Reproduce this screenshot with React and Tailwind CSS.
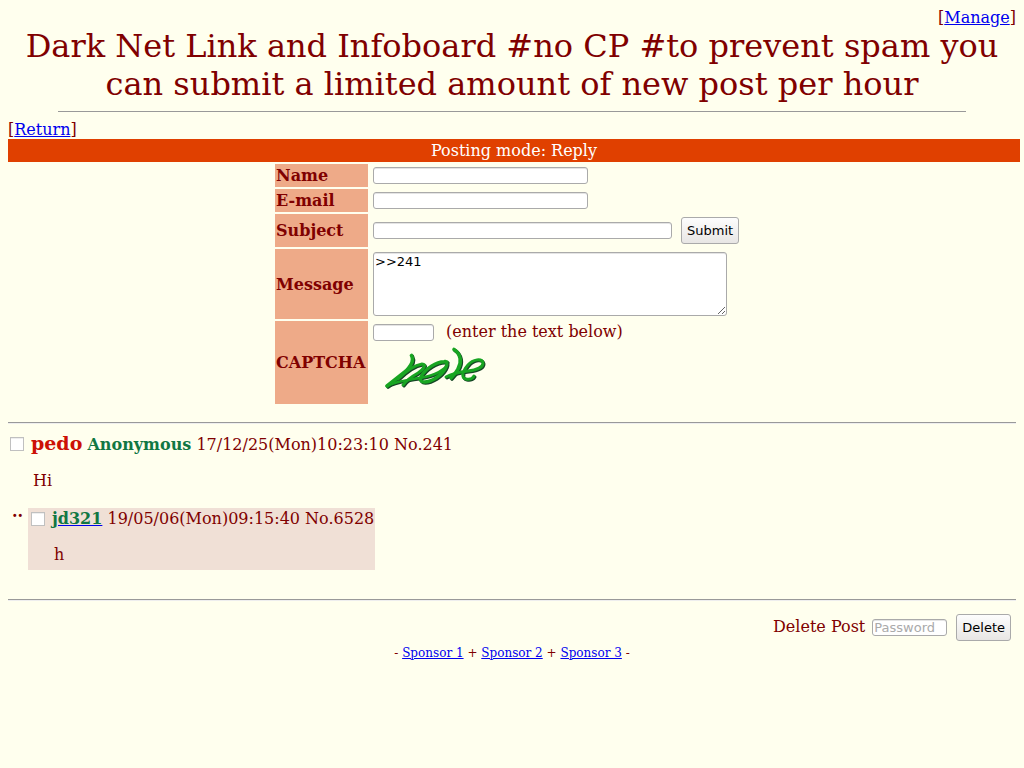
import React from "react";

const inputClass =
  "h-[17px] rounded-[3px] border border-[#aaaaaa] bg-white px-px font-['DejaVu_Sans',sans-serif] text-[13px] leading-[15px] text-black shadow-[inset_0_1px_0_#e4e4e4] placeholder:text-[#aaaaaa]";
const buttonClass =
  "h-[27px] rounded-[3px] border border-[#aaaaaa] bg-linear-to-b from-[#fdfdfd] to-[#e8e6e4] px-[5px] font-['DejaVu_Sans',sans-serif] text-[13px] leading-4 text-black";
const checkboxClass =
  "size-[14px] shrink-0 appearance-none border border-[#c0c0c0] bg-white shadow-[inset_0_1px_0_#eeeeee] checked:bg-[#117743]";
const linkClass = "text-[#0000ee] underline";
const ruleClass = "h-[2px] border-t border-b border-t-[#999999] border-b-[#eeeeee]";

function Row({ id, label, children }) {
  return (
    <div className="grid grid-cols-[93px_379px] gap-[2px]">
      <label htmlFor={id} className="flex items-center bg-[#eeaa88] px-px font-bold">
        {label}
      </label>
      <div className="p-[3px]">{children}</div>
    </div>
  );
}

function Captcha() {
  const strokes = (
    <>
      <path strokeWidth="3.6" d="M26.5 10.5C29 15 26 21 21 26L2 41" />
      <path strokeWidth="2.6" d="M2 41C8 37 18 36 28 34C42 32 52 30 61 22" />
      <path strokeWidth="3" d="M13 34C22 25 31 20 37 19C42 19 39 24 33 28C26 32 21 36 18 40" />
      <path strokeWidth="3.4" d="M62 17C52 15 39 25 36 32C33 39 43 38 51 33C59 28 65 18 60 16.500" />
      <path strokeWidth="3.6" d="M69 4.500C76 9 77 17 73 24C71 28 68 31 66 33" />
      <path strokeWidth="3" d="M61 32C68 28 75 27 83 26C92 25 98 22 98 18C97 13 88 14 83 20C77 27 76 33 81 34C85 35 88 33 89 31" />
    </>
  );
  return (
    <svg
      role="img"
      aria-label="CAPTCHA"
      viewBox="0 0 104 48"
      className="ml-3 h-12 w-[104px] fill-none"
      strokeLinecap="round"
      strokeLinejoin="round"
    >
      <g stroke="#164425" transform="translate(1 1)">{strokes}</g>
      <g stroke="#18a522">{strokes}</g>
    </svg>
  );
}

export default function App() {
  return (
    <div className="min-h-screen bg-[#ffffee] p-2 font-['DejaVu_Serif',serif] text-base leading-[19px] text-[#800000]">
      <header>
        <div className="text-right">
          [<a href="#manage" className={linkClass}>Manage</a>]
        </div>
        <h1 className="text-center text-[32px] leading-[38px]">
          Dark Net Link and Infoboard #no CP #to prevent spam you can submit a limited amount of new post per hour
        </h1>
        <hr className="mx-auto mt-2 mb-2 w-[90%] border-t border-[#999999]" />
      </header>

      <main>
        <nav>
          [<a href="#return" className={linkClass}>Return</a>]
        </nav>
        <h2 className="-mr-1 bg-[#e04000] py-[2px] text-center text-white">Posting mode: Reply</h2>

        <form className="mt-[2px] flex flex-col items-center gap-[2px]" onSubmit={(e) => e.preventDefault()}>
          <Row id="name" label="Name">
            <input id="name" type="text" className={`${inputClass} block w-[215px]`} />
          </Row>
          <Row id="email" label="E-mail">
            <input id="email" type="text" className={`${inputClass} block w-[215px]`} />
          </Row>
          <Row id="subject" label="Subject">
            <div className="flex items-center gap-[9px]">
              <input id="subject" type="text" className={`${inputClass} w-[299px]`} />
              <button type="submit" className={buttonClass}>Submit</button>
            </div>
          </Row>
          <Row id="message" label="Message">
            <textarea
              id="message"
              defaultValue=">>241"
              className="block h-16 w-[354px] resize rounded-[3px] border border-[#aaaaaa] bg-white px-px py-px font-['DejaVu_Sans',sans-serif] text-[13px] leading-4 text-black shadow-[inset_0_1px_0_#e4e4e4]"
            />
          </Row>
          <Row id="captcha" label="CAPTCHA">
            <div className="flex gap-3">
              <input id="captcha" type="text" className={`${inputClass} w-[61px]`} />
              <span className="-mt-[2px]">(enter the text below)</span>
            </div>
            <div className="h-[60px] pt-1">
              <Captcha />
            </div>
          </Row>
        </form>

        <hr className={`mt-[18px] ${ruleClass}`} />

        <form onSubmit={(e) => e.preventDefault()}>
          <article className="mt-2">
            <div className="flex items-center pl-[2px]">
              <input id="post-241" type="checkbox" aria-label="Select post 241" className={checkboxClass} />
              <div className="ml-[7px] leading-[23px]">
                <span className="text-[19px] font-bold text-[#cc1105]">pedo</span>{" "}
                <span className="font-bold text-[#117743]">Anonymous</span> 17/12/25(Mon)10:23:10 No.241
              </div>
            </div>
            <p className="mt-[15px] ml-[25px]">Hi</p>

            <div className="mt-[18px] flex items-start">
              <div className="w-5 pl-1 leading-[8px] font-bold">..</div>
              <div className="h-[62px] bg-[#f0e0d6]">
                <div className="flex items-center pt-px pl-[3px]">
                  <input id="post-6528" type="checkbox" aria-label="Select post 6528" className={checkboxClass} />
                  <div className="ml-[7px] pr-px">
                    <a href="#mail" className={linkClass}>
                      <span className="font-bold text-[#117743]">jd321</span>
                    </a>{" "}
                    19/05/06(Mon)09:15:40 No.6528
                  </div>
                </div>
                <p className="mt-[17px] ml-[26px]">h</p>
              </div>
            </div>
          </article>

          <hr className={`mt-[29px] ${ruleClass}`} />

          <div className="mt-[13px] mr-[5px] flex items-center justify-end">
            <label htmlFor="password" className="mr-[7px] -mt-[2px]">Delete Post</label>
            <input id="password" type="password" placeholder="Password" className={`${inputClass} w-[75px]`} />
            <button type="submit" className={`${buttonClass} ml-[9px]`}>Delete</button>
          </div>
        </form>
      </main>

      <footer className="mt-1 text-center text-xs leading-4">
        - <a href="#sponsor-1" className={linkClass}>Sponsor 1</a> +{" "}
        <a href="#sponsor-2" className={linkClass}>Sponsor 2</a> +{" "}
        <a href="#sponsor-3" className={linkClass}>Sponsor 3</a> -
      </footer>
    </div>
  );
}
